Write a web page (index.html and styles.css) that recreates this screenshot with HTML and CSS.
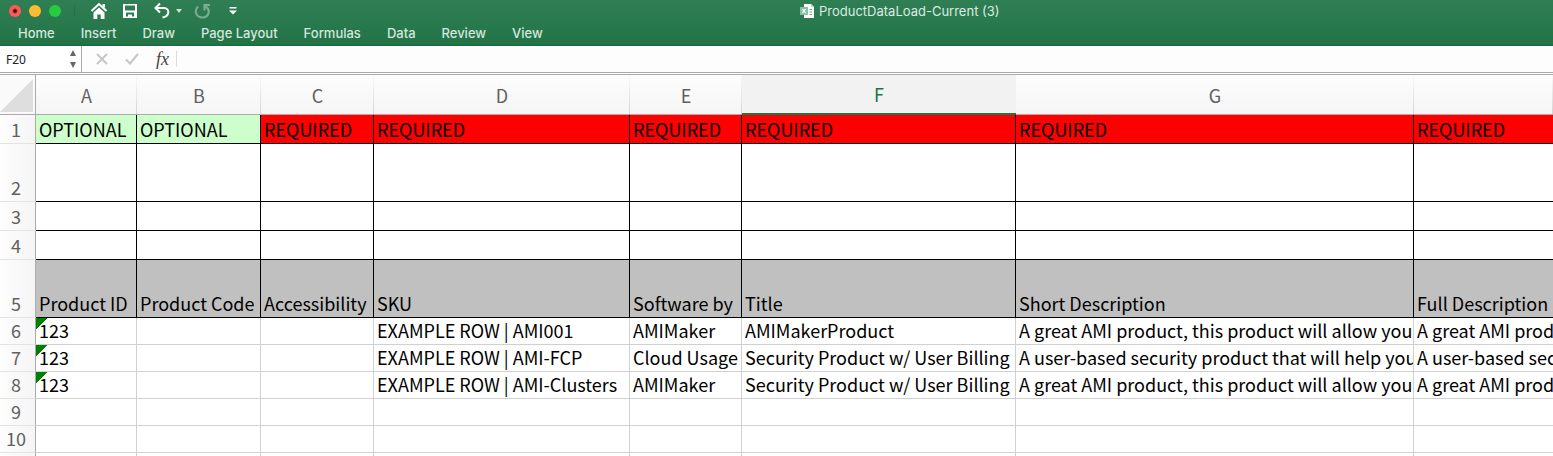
FILE: index.html
```html
<!DOCTYPE html>
<html lang="en">
  <head>
    <meta charset="UTF-8">
    <title>ProductDataLoad-Current (3)</title>
    <link rel="stylesheet" href="styles.css">
  </head>
  <body>
    <header class="ribbon">
      <div class="title-bar">
        <div class="tools">
          <div class="window-buttons">
            <button type="button" class="dot close" aria-label="Close"></button>
            <button type="button" class="dot minimize" aria-label="Minimize"></button>
            <button type="button" class="dot zoom" aria-label="Zoom"></button>
          </div>
          <button type="button" class="tool home" aria-label="Home">
            <svg width="18" height="18" viewBox="0 0 18 18"><path d="M1.500 9 L9 2 L16.500 9" fill="none" stroke="#fff" stroke-width="2"/><path d="M12.500 2h2.500v4l-2.500-2z M3.500 10.500 L9 5.500 L14.500 10.500 V17 H10.700 V12.500 H7.300 V17 H3.500z" fill="#fff"/></svg>
          </button>
          <button type="button" class="tool save" aria-label="Save">
            <svg width="16" height="16" viewBox="0 0 16 16"><path fill="#fff" fill-rule="evenodd" d="M1 1h14v14H1z M3 2.500v5h10v-5z M4 9.500v4h2v-2h4v2h2v-4z"/></svg>
          </button>
          <button type="button" class="tool undo" aria-label="Undo">
            <svg width="18" height="18" viewBox="0 0 18 18"><path d="M7 1.500 L2.500 6 L7 10.500 M2.500 6 H11 C17 6 17 14.500 9.500 15.500" fill="none" stroke="#fff" stroke-width="2"/></svg>
          </button>
          <button type="button" class="tool arrow" aria-label="Undo list">
            <svg width="6" height="4" viewBox="0 0 6 4"><path d="M0 0h6L3 4z" fill="#cde0d5"/></svg>
          </button>
          <button type="button" class="tool redo" aria-label="Repeat">
            <svg width="18" height="18" viewBox="0 0 18 18"><path d="M4 4.500 C-.5 9 2.500 15.500 8.500 15.500 C15 15.500 17 7.500 11.500 4.500 M16 3 H10.500 V8.500" fill="none" stroke="#7fae93" stroke-width="2"/></svg>
          </button>
          <button type="button" class="tool more" aria-label="Customize toolbar">
            <svg width="8" height="8" viewBox="0 0 8 8"><path d="M.5 0h7v1.500h-7z M0 3.500h8L4 7.500z" fill="#fff"/></svg>
          </button>
        </div>
        <h1 class="file-title">
          <svg width="14" height="14" viewBox="0 0 14 14"><path d="M4 0h7l3 3v11H4z" fill="#fff"/><path d="M11 0v3h3z" fill="#b9d6c5"/><path d="M9.500 5.500H12M9.500 8H12M9.500 10.500H12" stroke="#5fa882" stroke-width="1"/><path d="M0 3h8v8H0z" fill="#8cc0a3"/><path d="M2.500 5.200l3 3.600M5.500 5.200l-3 3.600" stroke="#fff" stroke-width="1.200"/></svg>
          <span>ProductDataLoad-Current (3)</span>
        </h1>
      </div>
      <nav class="tabs">
        <a href="#">Home</a>
        <a href="#">Insert</a>
        <a href="#">Draw</a>
        <a href="#">Page Layout</a>
        <a href="#">Formulas</a>
        <a href="#">Data</a>
        <a href="#">Review</a>
        <a href="#">View</a>
      </nav>
    </header>

    <div class="formula-bar">
      <div class="name-box">
        <input type="text" class="cell-name" value="F20" aria-label="Name box">
        <button type="button" class="stepper" aria-label="Cell names">
          <svg width="8" height="18" viewBox="0 0 8 18"><path d="M1 6h6L4 0z M1 12h6L4 18z" fill="#666"/></svg>
        </button>
      </div>
      <button type="button" class="cancel" aria-label="Cancel">
        <svg width="12" height="12" viewBox="0 0 12 12"><path d="M1 1l10 10M11 1L1 11" stroke="#c6c6c6" stroke-width="2"/></svg>
      </button>
      <button type="button" class="accept" aria-label="Enter">
        <svg width="14" height="12" viewBox="0 0 14 12"><path d="M1 6.500l4 4L13 1" fill="none" stroke="#c6c6c6" stroke-width="2"/></svg>
      </button>
      <button type="button" class="fx">fx</button>
      <input type="text" class="formula" aria-label="Formula">
    </div>

    <table class="sheet">
      <colgroup>
        <col class="col-num"><col class="col-a"><col class="col-b"><col class="col-c"><col class="col-d"><col class="col-e"><col class="col-f"><col class="col-g"><col>
      </colgroup>
      <thead>
        <tr>
          <th class="corner"><svg width="33" height="33" viewBox="0 0 33 33"><path d="M33 0v33H0z" fill="#dedede"/></svg></th>
          <th>A</th><th>B</th><th>C</th><th>D</th><th>E</th><th class="active">F</th><th>G</th><th></th>
        </tr>
      </thead>
      <tbody>
        <tr class="boxed">
          <th>1</th>
          <td class="optional">OPTIONAL</td><td class="optional">OPTIONAL</td><td class="required">REQUIRED</td><td class="required">REQUIRED</td><td class="required">REQUIRED</td><td class="required">REQUIRED</td><td class="required">REQUIRED</td><td class="required">REQUIRED</td>
        </tr>
        <tr class="boxed tall">
          <th>2</th>
          <td></td><td></td><td></td><td></td><td></td><td></td><td></td><td></td>
        </tr>
        <tr class="boxed">
          <th>3</th>
          <td></td><td></td><td></td><td></td><td></td><td></td><td></td><td></td>
        </tr>
        <tr class="boxed">
          <th>4</th>
          <td></td><td></td><td></td><td></td><td></td><td></td><td></td><td></td>
        </tr>
        <tr class="boxed tall names">
          <th>5</th>
          <td>Product ID</td><td>Product Code</td><td>Accessibility</td><td>SKU</td><td>Software by</td><td>Title</td><td>Short Description</td><td>Full Description</td>
        </tr>
        <tr>
          <th>6</th>
          <td class="flag">123</td><td></td><td></td><td>EXAMPLE ROW | AMI001</td><td>AMIMaker</td><td>AMIMakerProduct</td><td>A great AMI product, this product will allow you</td><td>A great AMI product</td>
        </tr>
        <tr>
          <th>7</th>
          <td class="flag">123</td><td></td><td></td><td>EXAMPLE ROW | AMI-FCP</td><td>Cloud Usage</td><td>Security Product w/ User Billing</td><td>A user-based security product that will help you</td><td>A user-based security</td>
        </tr>
        <tr>
          <th>8</th>
          <td class="flag">123</td><td></td><td></td><td>EXAMPLE ROW | AMI-Clusters</td><td>AMIMaker</td><td>Security Product w/ User Billing</td><td>A great AMI product, this product will allow you</td><td>A great AMI product</td>
        </tr>
        <tr>
          <th>9</th>
          <td></td><td></td><td></td><td></td><td></td><td></td><td></td><td></td>
        </tr>
        <tr>
          <th>10</th>
          <td></td><td></td><td></td><td></td><td></td><td></td><td></td><td></td>
        </tr>
        <tr>
          <th></th>
          <td></td><td></td><td></td><td></td><td></td><td></td><td></td><td></td>
        </tr>
      </tbody>
    </table>
  </body>
</html>
```
FILE: styles.css
```css
* {
box-sizing: border-box;
}
body {
margin: 0;
height: 100vh;
overflow: hidden;
background-color: #fff;
font-family: Inter, "Liberation Sans", sans-serif;
}
button {
padding: 0;
border: none;
background: none;
}
svg {
display: block;
}

/* green ribbon */
.ribbon {
height: 46px;
background: linear-gradient(#307f54, #217346);
border-bottom: 1px solid #1c683e;
}
.title-bar {
display: grid;
grid-template-columns: 800px 1fr;
height: 21px;
}
.tools {
display: flex;
align-items: center;
padding-left: 9px;
}
.window-buttons {
display: flex;
gap: 8px;
padding-right: 13px;
border-right: 1px solid #28704a;
}
.dot {
width: 12px;
height: 12px;
border-radius: 50%;
}
.close {
background: radial-gradient(circle, #4a0502 1px, #fc5b57 3px);
}
.minimize {
background-color: #fdbc2f;
}
.zoom {
background-color: #28cc41;
}
.home {
margin-left: 15px;
}
.save {
margin-left: 14px;
}
.undo {
margin-left: 15px;
}
.arrow {
margin-left: 5px;
}
.redo {
margin-left: 12px;
}
.more {
margin-left: 17px;
}
.file-title {
display: flex;
align-items: center;
gap: 5px;
margin: 0;
font-size: 13px;
font-weight: 400;
color: #dcebe2;
}
.tabs {
display: flex;
gap: 26px;
padding-left: 18px;
}
.tabs a {
font-size: 13px;
line-height: 25px;
font-weight: 500;
color: #d5e5dc;
text-decoration: none;
}

/* formula bar */
.formula-bar {
display: flex;
align-items: center;
height: 29px;
padding-bottom: 2px;
border-bottom: 1px solid #a9a9a9;
background: linear-gradient(#fdfdfd 26px, #a9a9a9 26px, #a9a9a9 27px, #fff 27px);
}
.name-box {
display: flex;
align-items: center;
width: 82px;
height: 26px;
border-right: 1px solid #a9a9a9;
background-color: #fff;
}
.cell-name {
flex: 1;
min-width: 0;
padding: 0 0 0 6px;
border: none;
font-family: "Noto Sans", sans-serif;
font-size: 12px;
color: #222;
}
.stepper {
margin-right: 4px;
}
.cancel {
margin-left: 14px;
}
.accept {
margin-left: 17px;
}
.fx {
margin-left: 17px;
padding-right: 7px;
border-right: 1px solid #dcdcdc;
font-family: "Liberation Serif", serif;
font-size: 18px;
line-height: 16px;
font-style: italic;
color: #444;
}
.formula {
flex: 1;
height: 20px;
border: none;
background: none;
}

/* worksheet grid */
.sheet {
width: 100%;
table-layout: fixed;
border-collapse: separate;
border-spacing: 0;
font-family: "Noto Sans CJK SC", sans-serif;
font-size: 18px;
line-height: 24px;
}
.col-num {
width: 36px;
}
.col-a {
width: 101px;
}
.col-b {
width: 124px;
}
.col-c {
width: 113px;
}
.col-d {
width: 256px;
}
.col-e {
width: 112px;
}
.col-f {
width: 274px;
}
.col-g {
width: 398px;
}
.sheet th {
padding: 0;
font-weight: 400;
color: #606060;
}
.sheet thead th {
height: 40px;
border-bottom: 1px solid #ababab;
/* column divider that fades out at the top */
background: linear-gradient(#fafafa, #d4d4d4) right / 1px 100% no-repeat, linear-gradient(#fdfdfd, #f5f5f5);
}
.sheet thead .corner {
padding: 3px 0 2px;
border-right: 1px solid #ababab;
background: #fafafa;
}
.sheet thead .active {
border-bottom: 2px solid #217346;
background: #f2f2f2;
color: #217346;
}
.sheet tbody tr {
height: 27px;
}
.sheet tbody .boxed {
height: 29px;
}
.sheet tbody .tall {
height: 58px;
}
.sheet tbody th {
vertical-align: bottom;
padding: 0 3px 2px 0;
border-right: 1px solid #ababab;
border-bottom: 1px solid #e3e3e3;
background: linear-gradient(to right, #fdfdfd, #f5f5f5);
}
.sheet td {
padding: 0 0 2px 3px;
vertical-align: bottom;
white-space: nowrap;
overflow: hidden;
border-right: 1px solid #d0d0d0;
border-bottom: 1px solid #d0d0d0;
color: #000;
}
.sheet .boxed td {
border-color: #000;
}
.sheet td:last-child {
border-right: none;
}
.sheet .optional {
background-color: #cfc;
}
.sheet .required {
background-color: #f00;
}
.sheet .names td {
background-color: #c0c0c0;
}
/* green error mark in the cell corner */
.sheet .flag {
background: linear-gradient(135deg, #008000 8px, transparent 8px);
}
```
